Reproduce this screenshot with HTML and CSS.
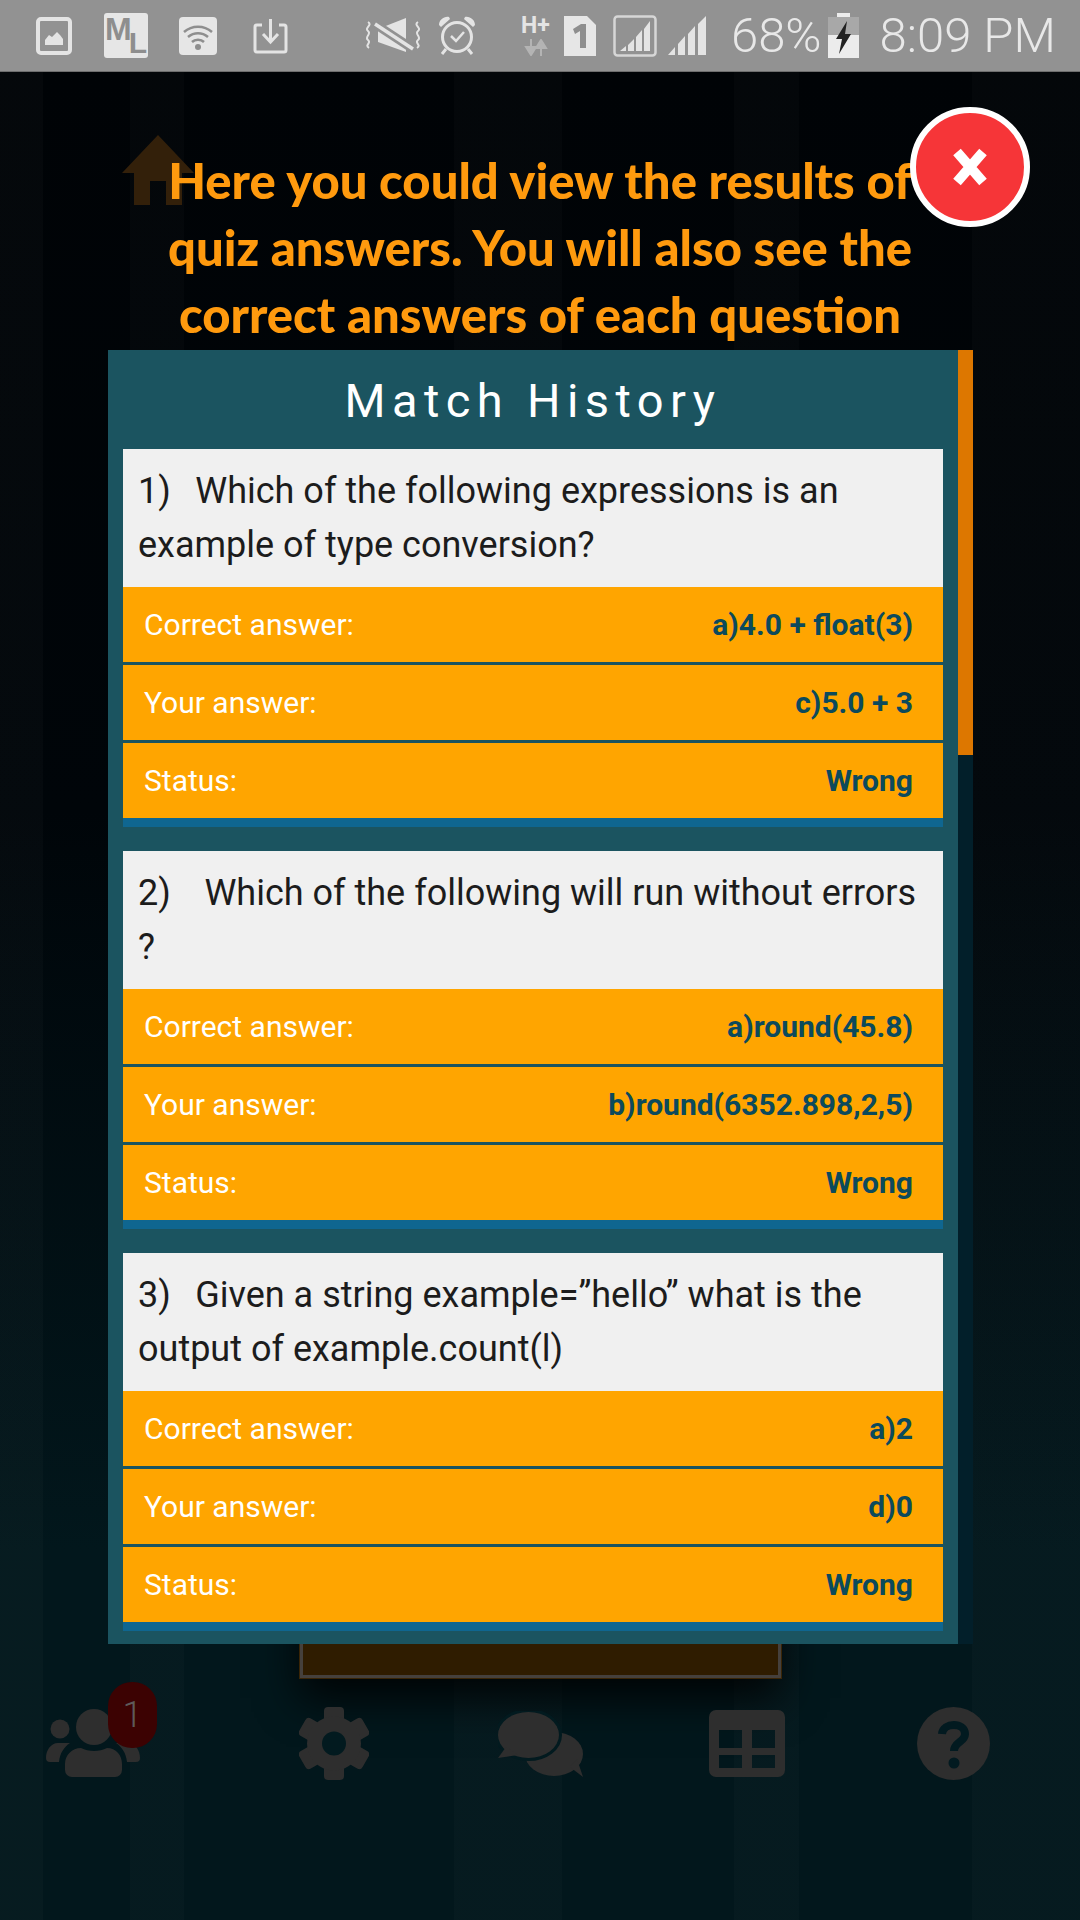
FILE: index.html
```html
<!DOCTYPE html>
<html lang="en">
<head>
    <meta charset="UTF-8">
    <meta name="viewport" content="width=device-width, initial-scale=1.0">
    <title>Match History</title>
    <link rel="stylesheet" href="styles.css">
</head>
<body>
<div class="app">
    <div class="status-bar">
        <svg class="ic-picture" width="36" height="38" viewBox="0 0 36 38"><rect x="2" y="2" width="32" height="34" rx="3" fill="none" stroke="#e4e4e4" stroke-width="4"/><path d="M9 28v-5l4-5 3 2 5-5 3 3 3 4v6z" fill="#e4e4e4"/></svg>
        <div class="ic-ml"><span class="ml-m">M</span><span class="ml-l">L</span></div>
        <svg class="ic-wifi" width="38" height="38" viewBox="0 0 38 38"><rect width="38" height="38" rx="4" fill="#e6e6e6"/><path d="M5 15c8-7 20-7 28 0M9 20c6-5 14-5 20 0M13 25c3-3 9-3 12 0" fill="none" stroke="#8e8e8e" stroke-width="2.500"/><circle cx="19" cy="30" r="3" fill="#8e8e8e"/></svg>
        <svg class="ic-download" width="35" height="36" viewBox="0 0 35 36"><path d="M9 7H4a2 2 0 0 0-2 2v23a2 2 0 0 0 2 2h27a2 2 0 0 0 2-2V9a2 2 0 0 0-2-2h-5" fill="none" stroke="#e4e4e4" stroke-width="3"/><path d="M17.500 1v22M10 16l7.500 8 7.500-8" fill="none" stroke="#e4e4e4" stroke-width="3"/></svg>
        <svg class="ic-mute" width="57" height="40" viewBox="0 0 57 40"><path d="M13 13l28-11v34L13 26z" fill="#e4e4e4"/><path d="M10 8l38 25" stroke="#929292" stroke-width="9"/><path d="M10 8l38 25" stroke="#e4e4e4" stroke-width="3.500"/><path d="M3 6c5 3-4 6 0 9s-4 6 0 9 -4 5 1 8M53 6c-5 3 4 6 0 9s4 6 0 9 4 5-1 8" fill="none" stroke="#e4e4e4" stroke-width="2"/></svg>
        <svg class="ic-alarm" width="40" height="41" viewBox="0 0 40 41"><circle cx="20" cy="22" r="14.500" fill="none" stroke="#e4e4e4" stroke-width="3"/><path d="M2 10c0-5 5-9 10-8l1 2-9 8zM38 10c0-5-5-9-10-8l-1 2 9 8z" fill="#e4e4e4"/><path d="M14 21l5 5 8-9" fill="none" stroke="#e4e4e4" stroke-width="2.500"/><path d="M9 34l-4 5M31 34l4 5" stroke="#e4e4e4" stroke-width="3"/></svg>
        <div class="ic-network">
            <span class="net-label">H+</span>
            <svg width="24" height="17" viewBox="0 0 24 17"><path d="M7 0v10M2 8l5 8 5-8zM17 17V7M12 9l5-8 5 8z" fill="#b4b4b4" stroke="#b4b4b4" stroke-width="2"/></svg>
        </div>
        <svg class="ic-sim" width="32" height="40" viewBox="0 0 32 40"><path d="M0 0h23l9 9v31H0z" fill="#e6e6e6"/><path d="M9 13l8-5h5v24h-6V15l-5 3z" fill="#8e8e8e"/></svg>
        <svg class="ic-signalbox" width="44" height="42" viewBox="0 0 44 42"><rect x="1.500" y="1.500" width="41" height="39" rx="3" fill="none" stroke="#d6d6d6" stroke-width="2.500"/><path d="M7 36h6v-5zM15 36h6V24l-6 6zM23 36h6V15l-6 7zM31 36h6V6l-6 8z" fill="#e4e4e4"/></svg>
        <svg class="ic-signal" width="40" height="39" viewBox="0 0 40 39"><path d="M0 39h7v-8zM10 39h7V20l-7 8zM20 39h7V10l-7 8zM30 39h8V0l-8 8z" fill="#e4e4e4"/></svg>
        <span class="status-text ic-percent">68%</span>
        <svg class="ic-battery" width="31" height="45" viewBox="0 0 31 45"><path d="M9 0h13v4h9v41H0V4h9z" fill="#ececec"/><path d="M0 4h31v18H0z" fill="#a8a8a8"/><path d="M19 8L8 26h6l-3 15 12-20h-6z" fill="#222"/></svg>
        <span class="status-text ic-time">8:09 PM</span>
    </div>

    <div class="screen">
        <svg class="home-icon" width="72" height="70" viewBox="0 0 72 70"><path d="M36 0l36 38H60v32H44V46H28v24H12V38H0z" fill="#33200a"/></svg>
        <div class="dim-box"></div>
        <div class="nav">
            <div class="nav-item nav-friends">
                <svg width="94" height="69" viewBox="0 0 94 69"><g fill="#2e2e2e"><circle cx="14" cy="21" r="9.500"/><circle cx="48" cy="19" r="18"/><circle cx="80" cy="21" r="9.500"/><path d="M0 50c0-8 5-15 12-15h12c-6 4-10 10-11 19H4a4 4 0 0 1-4-4z"/><path d="M94 50c0-8-5-15-12-15H70c6 4 10 10 11 19h9a4 4 0 0 0 4-4z"/><path d="M19 62v-6c0-9 7-16 16-16 4 2 8 3 13 3s9-1 13-3c9 0 15 7 15 16v6a7 7 0 0 1-7 7H26a7 7 0 0 1-7-7z"/></g></svg>
                <span class="badge">1</span>
            </div>
            <svg class="nav-item nav-gear" width="70" height="73" viewBox="0 0 70 73"><g fill="#2e2e2e"><rect x="25" y="0" width="20" height="73" rx="4"/><rect x="25" y="0" width="20" height="73" rx="4" transform="rotate(60 35 36.500)"/><rect x="25" y="0" width="20" height="73" rx="4" transform="rotate(-60 35 36.500)"/><circle cx="35" cy="36.500" r="27"/></g><circle cx="35" cy="36.500" r="12" fill="#021a1f"/></svg>
            <svg class="nav-item nav-chat" width="85" height="66" viewBox="0 0 85 66"><g fill="#2e2e2e"><ellipse cx="56" cy="43" rx="29" ry="22"/><path d="M72 56l13 10-6-18z"/></g><ellipse cx="30.500" cy="24" rx="30.500" ry="23" fill="#021a1f" stroke="#021a1f" stroke-width="6"/><g fill="#2e2e2e"><ellipse cx="30.500" cy="24" rx="30.500" ry="23"/><path d="M8 36L0 47l20-3z"/></g></svg>
            <svg class="nav-item nav-table" width="76" height="67" viewBox="0 0 76 67"><path fill-rule="evenodd" d="M7 0h62a7 7 0 0 1 7 7v53a7 7 0 0 1-7 7H7a7 7 0 0 1-7-7V7a7 7 0 0 1 7-7zM10 20v18h23V20zM43 20v18h23V20zM10 45v13h23V45zM43 45v13h23V45z" fill="#2e2e2e"/></svg>
            <svg class="nav-item nav-help" width="73" height="73" viewBox="0 0 73 73"><circle cx="36.500" cy="36.500" r="36.500" fill="#2e2e2e"/><path d="M25 27c1-12 23-12 23 0 0 8-11 8-11 17" fill="none" stroke="#021a20" stroke-width="8"/><circle cx="37" cy="56" r="5.500" fill="#021a20"/></svg>
        </div>

        <div class="overlay">
            <div class="tip">Here you could view the results of<br>quiz answers. You will also see the<br>correct answers of each question</div>
            <div class="close-btn">
                <svg width="36" height="40" viewBox="0 0 36 40"><path d="M5 5l26 30M31 5L5 35" stroke="#fff" stroke-width="10"/></svg>
            </div>
            <div class="history-wrap">
                <div class="panel">
                    <div class="panel-title">Match History</div>

                    <div class="card">
                        <div class="question">1)&ensp;&#8198;Which of the following expressions is an example of type conversion?</div>
                        <div class="rows">
                            <div class="row"><span class="label">Correct answer:</span><span class="value">a)4.0 + float(3)</span></div>
                            <div class="row"><span class="label">Your answer:</span><span class="value">c)5.0 + 3</span></div>
                            <div class="row"><span class="label">Status:</span><span class="value">Wrong</span></div>
                        </div>
                    </div>

                    <div class="card">
                        <div class="question">2)&ensp;&emsp14;&#8198;Which of the following will run without errors ?</div>
                        <div class="rows">
                            <div class="row"><span class="label">Correct answer:</span><span class="value">a)round(45.8)</span></div>
                            <div class="row"><span class="label">Your answer:</span><span class="value">b)round(6352.898,2,5)</span></div>
                            <div class="row"><span class="label">Status:</span><span class="value">Wrong</span></div>
                        </div>
                    </div>

                    <div class="card">
                        <div class="question">3)&ensp;&#8198;Given a string example=”hello” what is the output of example.count(l)</div>
                        <div class="rows">
                            <div class="row"><span class="label">Correct answer:</span><span class="value">a)2</span></div>
                            <div class="row"><span class="label">Your answer:</span><span class="value">d)0</span></div>
                            <div class="row"><span class="label">Status:</span><span class="value">Wrong</span></div>
                        </div>
                    </div>
                </div>
                <div class="scroll-track"><div class="scroll-thumb"></div></div>
            </div>
        </div>
    </div>
</div>
</body>
</html>
```

FILE: styles.css
```css
* {
    box-sizing: border-box;
}

body {
    margin: 0;
    font-family: Roboto, "Liberation Sans", sans-serif;
    background-color: #01090c;
}

.app {
    width: 1080px;
    height: 1920px;
    display: flex;
    flex-direction: column;
    overflow: hidden;
}

/* status bar */
.status-bar {
    height: 72px;
    flex-shrink: 0;
    background-color: #929292;
    border-bottom: 1px solid #6e6e6e;
    display: flex;
    align-items: center;
    padding-left: 36px;
}

.status-text {
    font-size: 49px;
    font-weight: 300;
    color: #e8e8e8;
    line-height: 72px;
}

.ic-ml {
    position: relative;
    width: 44px;
    height: 45px;
    margin-left: 32px;
    border-radius: 3px;
    background-color: #e6e6e6;
    font-family: "Liberation Sans", sans-serif;
    font-weight: 700;
    color: #8e8e8e;
}

.ml-m {
    position: absolute;
    left: 1px;
    top: 0;
    font-size: 32px;
    line-height: 32px;
}

.ml-l {
    position: absolute;
    right: 1px;
    top: 15px;
    font-size: 30px;
    line-height: 30px;
}

.ic-wifi { margin-left: 31px; }
.ic-download { margin-left: 36px; }
.ic-mute { margin-left: 77px; }
.ic-alarm { margin-left: 15px; }
.ic-sim { margin-left: 13px; }
.ic-signalbox { margin-left: 17px; }
.ic-signal { margin-left: 11px; }
.ic-percent { margin-left: 23px; }
.ic-battery { margin-left: 6px; }
.ic-time { margin-left: 21px; }

.ic-network {
    margin-left: 43px;
    width: 31px;
    display: flex;
    flex-direction: column;
    align-items: center;
    gap: 3px;
}

.net-label {
    font-size: 23px;
    font-weight: 700;
    line-height: 20px;
    color: #e4e4e4;
}

/* dimmed screen behind the tutorial */
.screen {
    position: relative;
    flex: 1;
    display: flex;
    flex-direction: column;
    background:
        linear-gradient(90deg, rgba(255,255,255,0.018) 0 4%, transparent 4% 12%, rgba(255,255,255,0.014) 12% 17%, transparent 17% 42%, rgba(255,255,255,0.014) 42% 52%, transparent 52% 68%, rgba(255,255,255,0.014) 68% 74%, transparent 74% 90%, rgba(255,255,255,0.014) 90% 100%),
        linear-gradient(180deg, #000306 0%, #000509 40%, #02171c 80%, #02171c 100%);
}

.home-icon {
    margin: 63px 0 0 122px;
}

.dim-box {
    width: 481px;
    height: 300px;
    margin: 1173px 0 0 300px;
    background-color: #2f1c00;
    border: 3px solid #45403c;
    box-shadow: 0 0 0 1px #3a2506, 0 20px 40px rgba(0, 0, 0, 0.85);
}

.nav {
    display: flex;
    align-items: flex-start;
    margin-top: 29px;
    padding-left: 46px;
}

.nav-item {
    flex-shrink: 0;
}

.nav-friends {
    position: relative;
    margin-top: 1px;
    height: 69px;
}

.nav-gear { margin-left: 159px; }
.nav-chat { margin-left: 129px; margin-top: 4px; }
.nav-table { margin-left: 126px; margin-top: 3px; }
.nav-help { margin-left: 132px; }

.badge {
    position: absolute;
    left: 62px;
    top: -26px;
    width: 49px;
    height: 66px;
    border-radius: 24px;
    background-color: #3c0202;
    color: #5e5a5a;
    font-size: 36px;
    font-weight: 300;
    text-align: center;
    line-height: 66px;
}

/* tutorial overlay */
.overlay {
    position: absolute;
    top: 0;
    left: 0;
    right: 0;
    bottom: 0;
    padding-top: 75px;
}

.tip {
    font-family: Lato, sans-serif;
    font-size: 49px;
    font-weight: 900;
    line-height: 67px;
    height: 203px;
    color: #ff9a0e;
    text-align: center;
}

.close-btn {
    position: absolute;
    left: 910px;
    top: 35px;
    width: 120px;
    height: 120px;
    border-radius: 50%;
    background-color: #f63538;
    border: 6px solid #fff;
    display: flex;
    align-items: center;
    justify-content: center;
}

.history-wrap {
    display: flex;
    margin-left: 108px;
    width: 865px;
    height: 1294px;
}

.panel {
    width: 850px;
    padding: 0 15px 12px;
    background-color: #1b5460;
}

.panel-title {
    height: 99px;
    padding-top: 21px;
    font-size: 47px;
    font-weight: 400;
    letter-spacing: 6.4px;
    line-height: 60px;
    color: #fff;
    text-align: center;
}

.card {
    margin-bottom: 24px;
    background-color: #0f6690;
    padding-bottom: 9px;
}

.card:last-child {
    margin-bottom: 0;
}

.question {
    height: 138px;
    padding: 15px;
    background-color: #f0f0f0;
    color: #1c1c1c;
    font-size: 36px;
    line-height: 54px;
}

.rows {
    display: flex;
    flex-direction: column;
    gap: 3px;
    background-color: #1b5460;
}

.row {
    height: 75px;
    display: flex;
    align-items: center;
    justify-content: space-between;
    padding: 0 30px 0 21px;
    background-color: #ffa500;
    font-size: 30px;
}

.label {
    color: #fff;
}

.value {
    font-weight: 700;
    color: #0c4a5c;
}

.scroll-track {
    width: 15px;
    background-color: #021f2a;
}

.scroll-thumb {
    height: 405px;
    background-color: #dd7700;
}
```
